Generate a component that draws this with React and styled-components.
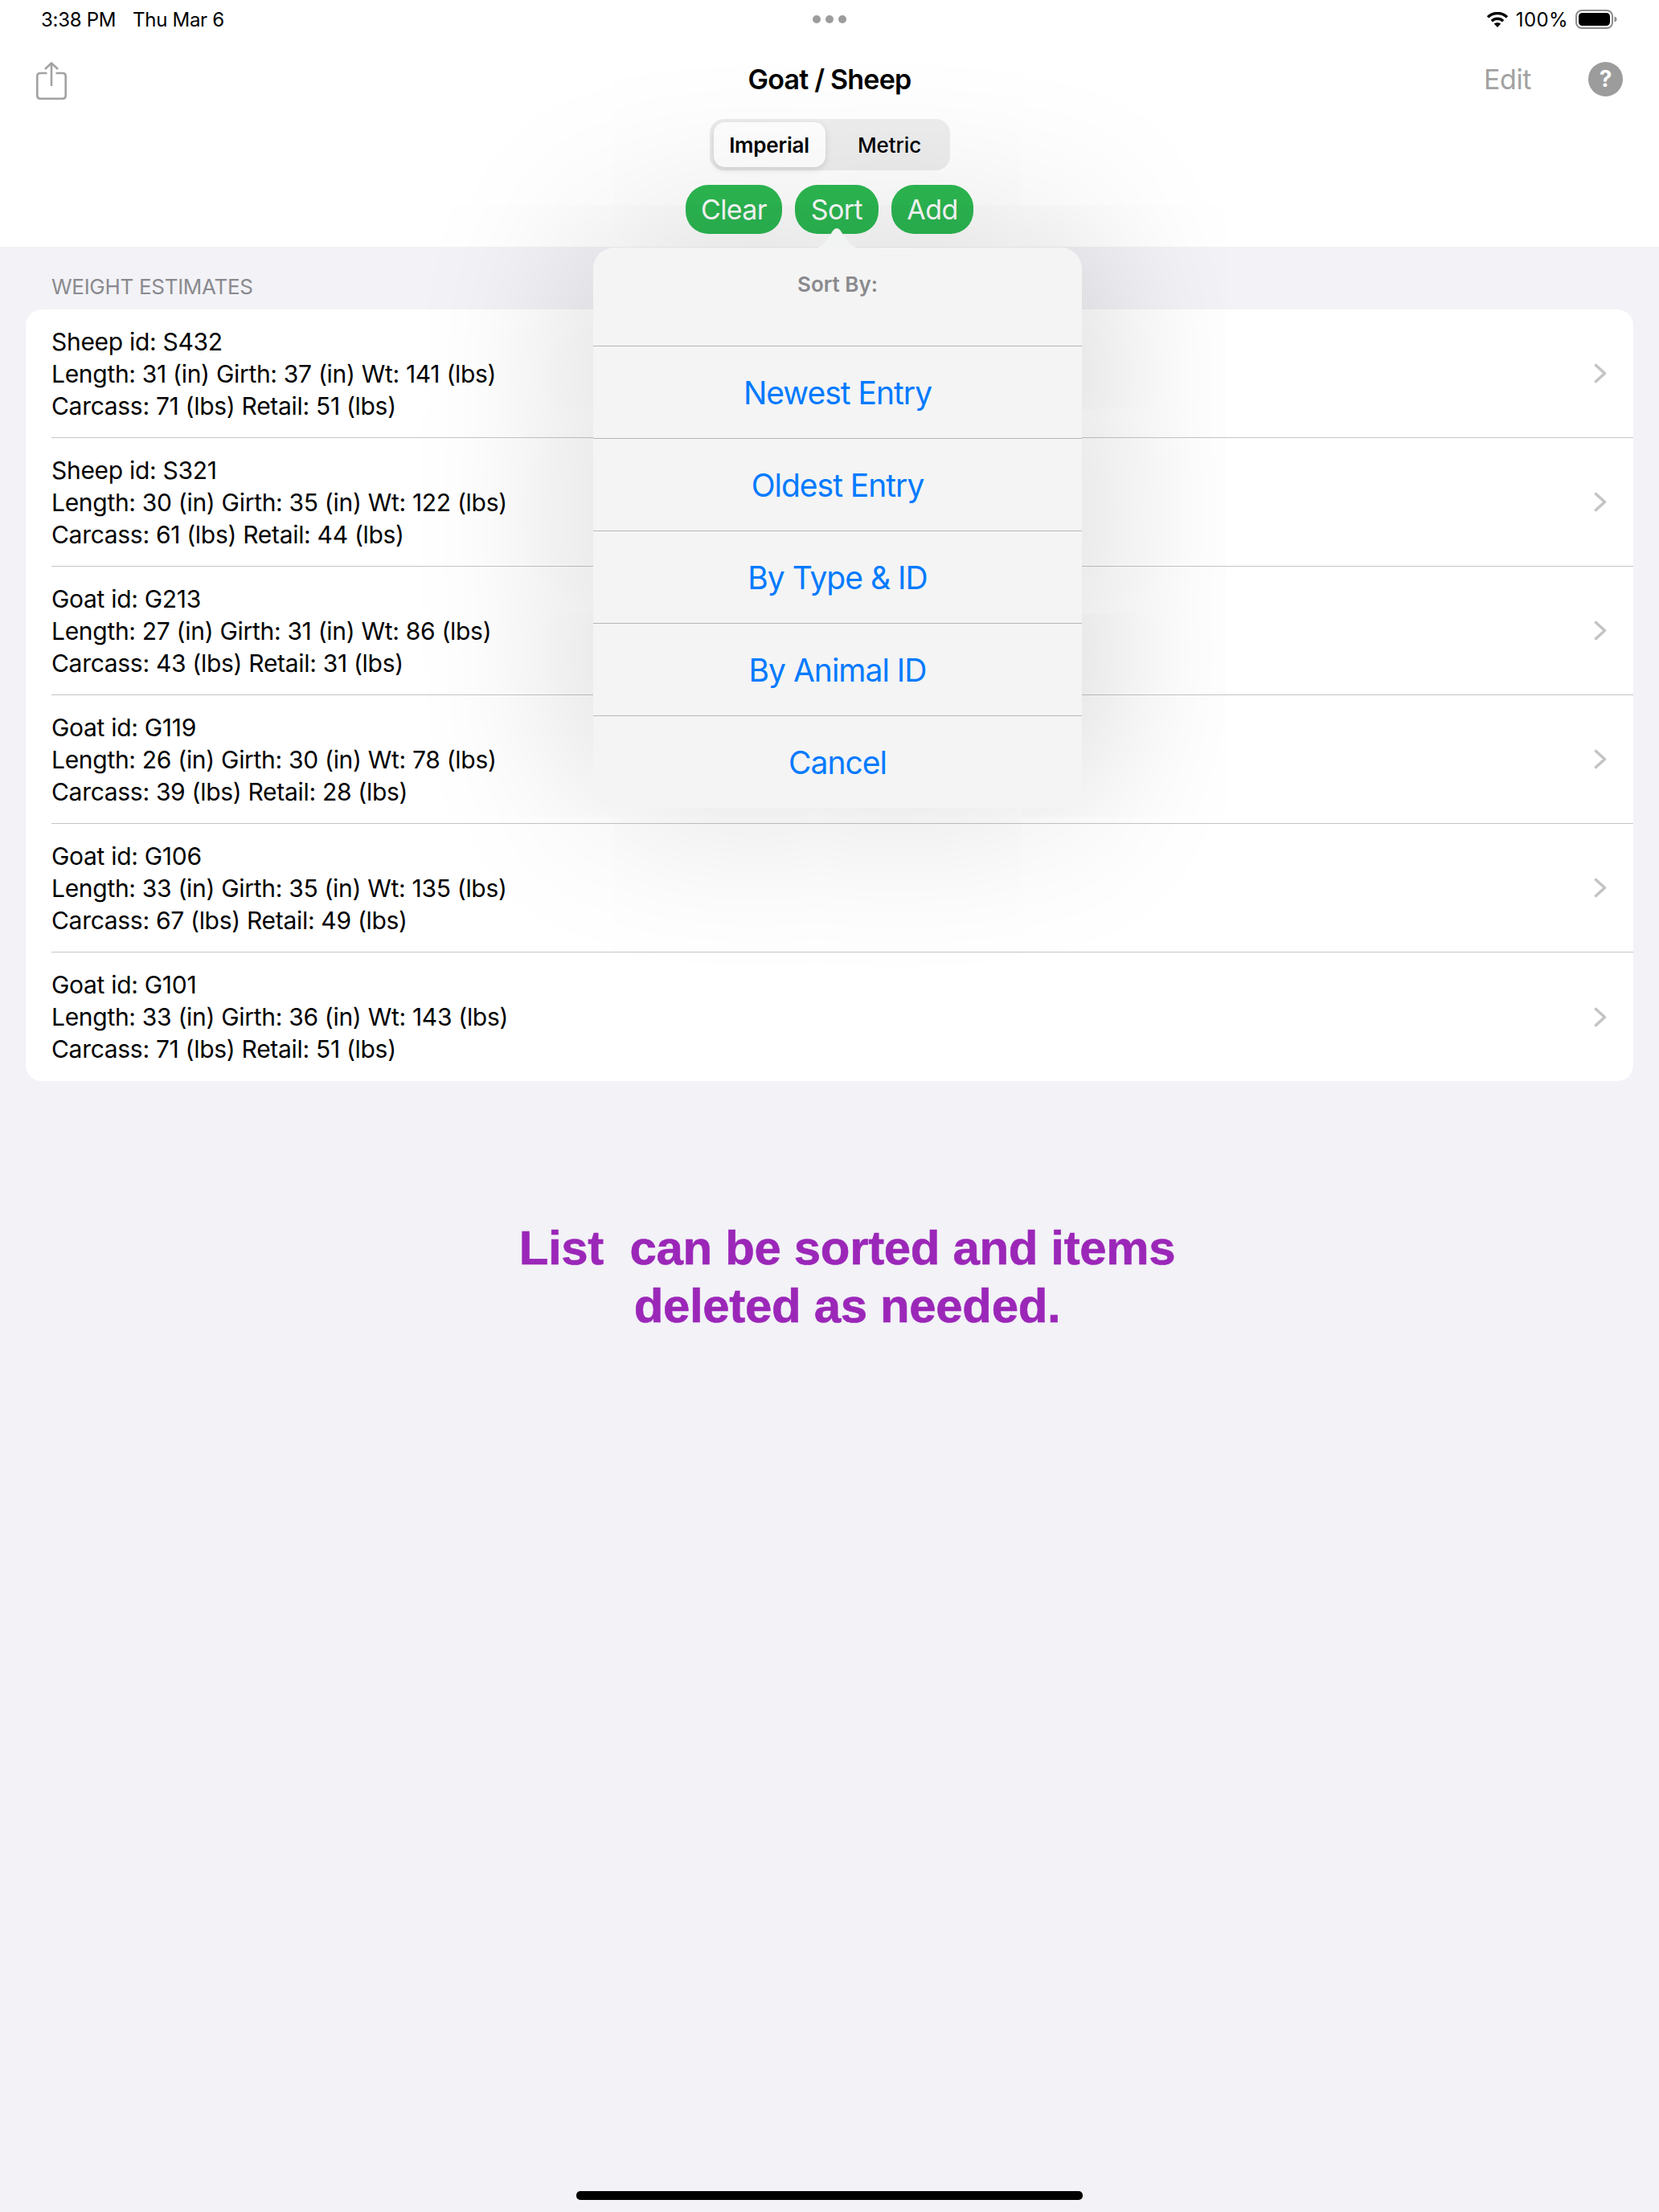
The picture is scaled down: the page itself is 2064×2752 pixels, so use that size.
import React from 'react';
import styled, { createGlobalStyle } from 'styled-components';

const sans = `Inter, "Noto Sans", "Liberation Sans", sans-serif`;

const animals = [
  { title: 'Sheep id: S432', size: 'Length: 31 (in) Girth: 37 (in) Wt: 141 (lbs)', yieldText: 'Carcass: 71 (lbs) Retail: 51 (lbs)' },
  { title: 'Sheep id: S321', size: 'Length: 30 (in) Girth: 35 (in) Wt: 122 (lbs)', yieldText: 'Carcass: 61 (lbs) Retail: 44 (lbs)' },
  { title: 'Goat id: G213', size: 'Length: 27 (in) Girth: 31 (in) Wt: 86 (lbs)', yieldText: 'Carcass: 43 (lbs) Retail: 31 (lbs)' },
  { title: 'Goat id: G119', size: 'Length: 26 (in) Girth: 30 (in) Wt: 78 (lbs)', yieldText: 'Carcass: 39 (lbs) Retail: 28 (lbs)' },
  { title: 'Goat id: G106', size: 'Length: 33 (in) Girth: 35 (in) Wt: 135 (lbs)', yieldText: 'Carcass: 67 (lbs) Retail: 49 (lbs)' },
  { title: 'Goat id: G101', size: 'Length: 33 (in) Girth: 36 (in) Wt: 143 (lbs)', yieldText: 'Carcass: 71 (lbs) Retail: 51 (lbs)' },
];

const sortOptions = ['Newest Entry', 'Oldest Entry', 'By Type & ID', 'By Animal ID', 'Cancel'];

const App = () => (
  <Page>
    <GlobalStyle />
    <Header>
      <StatusBar>
        <StatusLeft>
          <span>3:38 PM</span>
          <span>Thu Mar 6</span>
        </StatusLeft>
        <Dots>
          <Dot />
          <Dot />
          <Dot />
        </Dots>
        <StatusRight>
          <WifiIcon />
          <BatteryLabel>100%</BatteryLabel>
          <BatteryIcon />
        </StatusRight>
      </StatusBar>
      <NavBar>
        <ShareIcon />
        <NavTitle>Goat / Sheep</NavTitle>
        <NavActions>
          <EditLabel>Edit</EditLabel>
          <HelpBadge>?</HelpBadge>
        </NavActions>
      </NavBar>
      <Segmented>
        <Segment selected>Imperial</Segment>
        <Segment>Metric</Segment>
      </Segmented>
      <ButtonRow>
        <PillButton width={120}>Clear</PillButton>
        <PillButton width={104}>Sort</PillButton>
        <PillButton width={102}>Add</PillButton>
      </ButtonRow>
    </Header>

    <SectionLabel>WEIGHT ESTIMATES</SectionLabel>
    <Card>
      {animals.map((animal, i) => (
        <Row key={animal.title}>
          <RowInner last={i === animals.length - 1}>
            <RowText>
              <div>{animal.title}</div>
              <div>{animal.size}</div>
              <div>{animal.yieldText}</div>
            </RowText>
            <Chevron />
          </RowInner>
        </Row>
      ))}
    </Card>

    <Note>
      <div>List  can be sorted and items</div>
      <div>deleted as needed.</div>
    </Note>

    <HomeIndicator />

    <Popover>
      <PopoverArrow viewBox="0 0 58 26">
        <path d="M0 26 C8 25 12 21 16 16 L25 3 Q29 -1 33 3 L42 16 C46 21 50 25 58 26 Z" fill="#f2f3f3" />
      </PopoverArrow>
      <PopoverTitle>Sort By:</PopoverTitle>
      {sortOptions.map(option => (
        <SortOption key={option}>{option}</SortOption>
      ))}
    </Popover>
  </Page>
);

const WifiIcon = () => (
  <svg width="28" height="19" viewBox="0 0 28 19">
    <path d="M2 6.4 A17 17 0 0 1 26 6.4" fill="none" stroke="#000" strokeWidth="3.4" />
    <path d="M6.9 11.2 A10 10 0 0 1 21.1 11.2" fill="none" stroke="#000" strokeWidth="3.4" />
    <path d="M14 19 L9.8 14.6 A6 6 0 0 1 18.2 14.6 Z" fill="#000" />
  </svg>
);

const BatteryIcon = () => (
  <svg width="52" height="24" viewBox="0 0 52 24">
    <rect x="1" y="1" width="45" height="22" rx="7" fill="none" stroke="#8c8c8c" strokeWidth="2" />
    <rect x="4" y="4" width="39" height="16" rx="4.5" fill="#000" />
    <path d="M48.5 8.5 C50.5 9 51.5 10.4 51.5 12 C51.5 13.6 50.5 15 48.5 15.5 Z" fill="#8c8c8c" />
  </svg>
);

const ShareIcon = () => (
  <ShareSvg width="38" height="47" viewBox="0 0 38 47" fill="none" stroke="#a2a2a2" strokeWidth="2.6">
    <path d="M13.5 14 H5 Q1.3 14 1.3 17.7 V42 Q1.3 45.7 5 45.7 H33 Q36.7 45.7 36.7 42 V17.7 Q36.7 14 33 14 H24.5" />
    <path d="M19 1.5 V30" />
    <path d="M11 9 L19 1.5 L27 9" />
  </ShareSvg>
);

const Chevron = () => (
  <ChevronIcon width="16" height="25" viewBox="0 0 16 25" fill="none" stroke="#c4c4c7" strokeWidth="3.6" strokeLinecap="round" strokeLinejoin="round">
    <path d="M2.5 2.5 L13.5 12.5 L2.5 22.5" />
  </ChevronIcon>
);

const GlobalStyle = createGlobalStyle`
  html, body {
    margin: 0;
    padding: 0;
    background: #f2f2f7;
  }
`;

const Page = styled.div`
  position: relative;
  display: flex;
  flex-direction: column;
  width: 2064px;
  height: 2752px;
  overflow: hidden;
  background: #f2f2f7;
  font-family: ${sans};
  color: #000;
`;

const Header = styled.header`
  display: flex;
  flex-direction: column;
  align-items: center;
  height: 307px;
  background: #fff;
`;

const StatusBar = styled.div`
  display: grid;
  grid-template-columns: 1fr auto 1fr;
  align-items: center;
  width: 100%;
  height: 48px;
  box-sizing: border-box;
  padding: 0 52px 0 51px;
  font-size: 24px;
  letter-spacing: -0.3px;
`;

const StatusLeft = styled.div`
  display: flex;
  gap: 21px;
`;

const StatusRight = styled.div`
  display: flex;
  align-items: center;
  justify-content: flex-end;
  gap: 9px;
`;

const BatteryLabel = styled.span`
  letter-spacing: 0.4px;
`;

const Dots = styled.div`
  display: flex;
  gap: 6px;
`;

const Dot = styled.span`
  width: 10px;
  height: 10px;
  border-radius: 50%;
  background: #9c9c9c;
`;

const NavBar = styled.div`
  display: grid;
  grid-template-columns: 1fr auto 1fr;
  align-items: center;
  width: 100%;
  height: 100px;
  box-sizing: border-box;
  padding: 0 45px;
`;

const ShareSvg = styled.svg`
  margin-top: 5px;
`;

const NavTitle = styled.div`
  font-size: 34px;
  font-weight: 600;
  letter-spacing: -0.8px;
`;

const NavActions = styled.div`
  display: flex;
  align-items: center;
  justify-content: flex-end;
  gap: 71px;
`;

const EditLabel = styled.span`
  font-size: 34px;
  letter-spacing: -0.4px;
  color: #a2a2a2;
`;

const HelpBadge = styled.span`
  display: flex;
  align-items: center;
  justify-content: center;
  width: 43px;
  height: 43px;
  border-radius: 50%;
  background: #9c9c9c;
  color: #fff;
  font-size: 28px;
  font-weight: 700;
`;

const Segmented = styled.div`
  display: flex;
  width: 299px;
  height: 64px;
  box-sizing: border-box;
  padding: 4px 5px;
  border-radius: 18px;
  background: #eeeeef;
`;

const Segment = styled.div`
  display: flex;
  flex: none;
  align-items: center;
  justify-content: center;
  box-sizing: border-box;
  width: ${props => (props.selected ? '139px' : '150px')};
  padding-left: ${props => (props.selected ? '0' : '10px')};
  border-radius: 14px;
  font-size: 26px;
  font-weight: ${props => (props.selected ? 600 : 500)};
  letter-spacing: ${props => (props.selected ? '-0.2px' : '-0.1px')};
  background: ${props => (props.selected ? '#fff' : 'transparent')};
  box-shadow: ${props => (props.selected ? '0 3px 8px rgba(0, 0, 0, 0.12)' : 'none')};
`;

const ButtonRow = styled.div`
  display: flex;
  gap: 16px;
  margin-top: 18px;
`;

const PillButton = styled.div`
  display: flex;
  align-items: center;
  justify-content: center;
  width: ${props => props.width}px;
  height: 61px;
  border-radius: 28px;
  background: #2cb952;
  color: #fff;
  font-size: 34px;
  letter-spacing: -0.6px;
`;

const SectionLabel = styled.div`
  margin: 32px 0 10px 64px;
  font-size: 26px;
  line-height: 36px;
  letter-spacing: -0.3px;
  color: #8a8a8e;
`;

const Card = styled.div`
  margin: 0 32px;
  border-radius: 20px;
  background: #fff;
  overflow: hidden;
`;

const Row = styled.div`
  height: 160px;
  padding-left: 32px;
`;

const RowInner = styled.div`
  display: flex;
  align-items: center;
  justify-content: space-between;
  height: 100%;
  box-sizing: border-box;
  padding-right: 33px;
  border-bottom: ${props => (props.last ? 'none' : '1.5px solid #c6c6c8')};
`;

const RowText = styled.div`
  font-size: 30px;
  line-height: 40px;
  letter-spacing: -0.3px;
`;

const ChevronIcon = styled.svg`
  flex: none;
`;

const Note = styled.div`
  margin: 172px 0 0 44px;
  font-family: "Liberation Sans", Arial, sans-serif;
  font-size: 60px;
  font-weight: 700;
  line-height: 72px;
  letter-spacing: -0.35px;
  -webkit-text-stroke: 0.6px #9b27b8;
  text-align: center;
  white-space: pre;
  color: #9b27b8;
`;

const HomeIndicator = styled.div`
  align-self: center;
  width: 630px;
  height: 11px;
  margin-top: auto;
  margin-bottom: 15px;
  border-radius: 5px;
  background: #000;
`;

const Popover = styled.div`
  position: absolute;
  left: 738px;
  top: 308px;
  width: 608px;
  height: 697px;
  border-radius: 26px;
  background: #f4f4f4;
  box-shadow: 0 -15px 220px rgba(0, 0, 0, 0.2);
`;

const PopoverArrow = styled.svg`
  position: absolute;
  left: 274px;
  top: -25px;
  width: 58px;
  height: 26px;
  display: block;
`;

const PopoverTitle = styled.div`
  height: 122px;
  box-sizing: border-box;
  padding-top: 28px;
  font-size: 26px;
  font-weight: 600;
  line-height: 36px;
  text-align: center;
  color: #8a8a8e;
`;

const SortOption = styled.div`
  display: flex;
  align-items: center;
  justify-content: center;
  height: 115px;
  box-sizing: border-box;
  border-top: 1.5px solid #b6b6b6;
  font-size: 39px;
  letter-spacing: -1px;
  color: #007aff;
`;

export default App;
